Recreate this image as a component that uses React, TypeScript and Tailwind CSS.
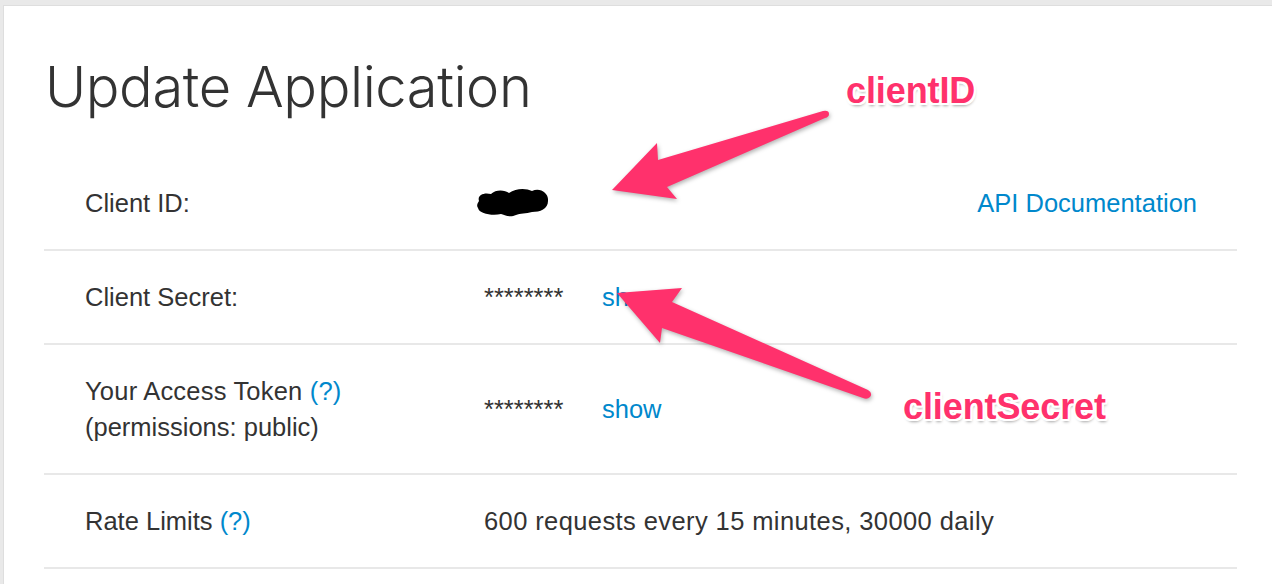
import React from "react";

const LINK = "text-[#0088cc]";

// annotation label with white outline + soft shadow
const Callout = ({ text, className }: { text: string; className: string }) => (
  <div
    className={`absolute font-bold text-[36px] leading-none text-[#ff316c] tracking-[-0.1px] [text-shadow:2px_0_0_#fff,-2px_0_0_#fff,0_2px_0_#fff,0_-2px_0_#fff,2px_2px_0_#fff,-2px_2px_0_#fff,2px_-2px_0_#fff,-2px_-2px_0_#fff,1px_3px_3px_rgba(0,0,0,0.35)] ${className}`}
  >
    {text}
  </div>
);

const Row = ({
  label,
  children,
  right,
}: {
  label: React.ReactNode;
  children?: React.ReactNode;
  right?: React.ReactNode;
}) => (
  <div className="flex items-center py-[28px] border-b-2 border-[#e8e8e8] pl-[41px] pr-[40px]">
    <div className="w-[399px] shrink-0">{label}</div>
    <div className="flex-1 flex items-center">{children}</div>
    {right}
  </div>
);

export default function App() {
  return (
    <div className="relative w-full h-[584px] overflow-hidden bg-[#e9e9e9] pt-[5px] pl-[3px] font-['Liberation_Sans',Arial,sans-serif] text-[#333]">
      <div className="w-[1274px] h-full bg-white border-t border-l border-[#dedede] px-[40px]">
        <h1 className="pt-[53px] pb-[42px] pl-[1px] font-['Inter',sans-serif] font-light text-[56px] leading-[56px] tracking-[-0.4px] text-[#333]">
          Update Application
        </h1>

        <div className="text-[25.5px] leading-[36px]">
          <Row
            label="Client ID:"
            right={<a className={LINK}>API Documentation</a>}
          >
            <svg width="74" height="32" viewBox="0 0 74 32" className="-ml-[9px] -mt-[2px]">
              <path
                d="M4 15 C2 9 9 6 16 8 C21 3 30 4 34 7 C41 2 51 2 57 5 C65 1 74 7 73 15 C73 23 65 26 57 26 C51 28 45 27 41 29 C35 32 29 29 26 28 C18 30 4 28 3 22 C1 19 3 17 4 15 Z"
                fill="#000"
              />
            </svg>
          </Row>

          <Row label="Client Secret:">
            <span className="w-[118px]">********</span>
            <a className={LINK}>show</a>
          </Row>

          <Row
            label={
              <div>
                <div className="tracking-[0.2px]">
                  Your Access Token <a className={LINK}>(?)</a>
                </div>
                <div>(permissions: public)</div>
              </div>
            }
          >
            <span className="w-[118px]">********</span>
            <a className={LINK}>show</a>
          </Row>

          <Row
            label={
              <span>
                Rate Limits <a className={LINK}>(?)</a>
              </span>
            }
          >
            <span className="tracking-[0.4px]">
              600 requests every 15 minutes, 30000 daily
            </span>
          </Row>
        </div>
      </div>

      {/* annotation overlay */}
      <svg
        className="absolute inset-0 pointer-events-none"
        width="1272"
        height="584"
        viewBox="0 0 1272 584"
      >
        <g fill="#ff316c" style={{ filter: "drop-shadow(1px 2px 2px rgba(0,0,0,0.3))" }}>
          <path d="M612 190 L657 143 L658 160 L823 111 Q829 110 829 114 Q829 117 825 118 L667 187 L677 199 Z" />
          <path d="M617 293 L682 288 L672 302 L868 390 Q873 393 870 397 Q867 400 863 398 L662 328 L660 343 Z" />
        </g>
      </svg>
      <Callout text="clientID" className="left-[846px] top-[73px]" />
      <Callout text="clientSecret" className="left-[903px] top-[389px]" />
    </div>
  );
}
